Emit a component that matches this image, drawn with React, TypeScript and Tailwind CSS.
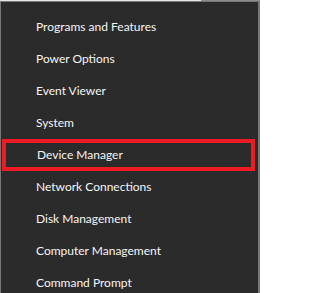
import React from 'react';

const items = [
  'Programs and Features',
  'Power Options',
  'Event Viewer',
  'System',
  'Device Manager',
  'Network Connections',
  'Disk Management',
  'Computer Management',
  'Command Prompt',
];

const App: React.FC = () => {
  return (
    <div className="w-[260px] h-[293px] overflow-hidden bg-[#2b2b2b] flex flex-col" style={{ fontFamily: 'Lato, "Noto Sans", sans-serif' }}>
      <div className="flex h-px shrink-0">
        <div className="w-[201px] bg-[#e6e6e6]" />
        <div className="flex-1 bg-[#8c8c8c]" />
      </div>
      <div className="flex-1 flex flex-col border-l border-t border-r-2 border-[#777777] pt-[9px]">
        {items.map(label => (
          <div
            key={label}
            className={
              label === 'Device Manager'
                ? 'h-8 shrink-0 flex items-center pl-[31px] ml-px mr-[3px] border-4 border-[#ed1c24] text-[12px] text-[#f5f5f5]'
                : 'h-8 shrink-0 flex items-center pl-[35px] text-[12px] text-[#f5f5f5]'
            }
          >
            {label}
          </div>
        ))}
      </div>
    </div>
  );
};

export default App;
